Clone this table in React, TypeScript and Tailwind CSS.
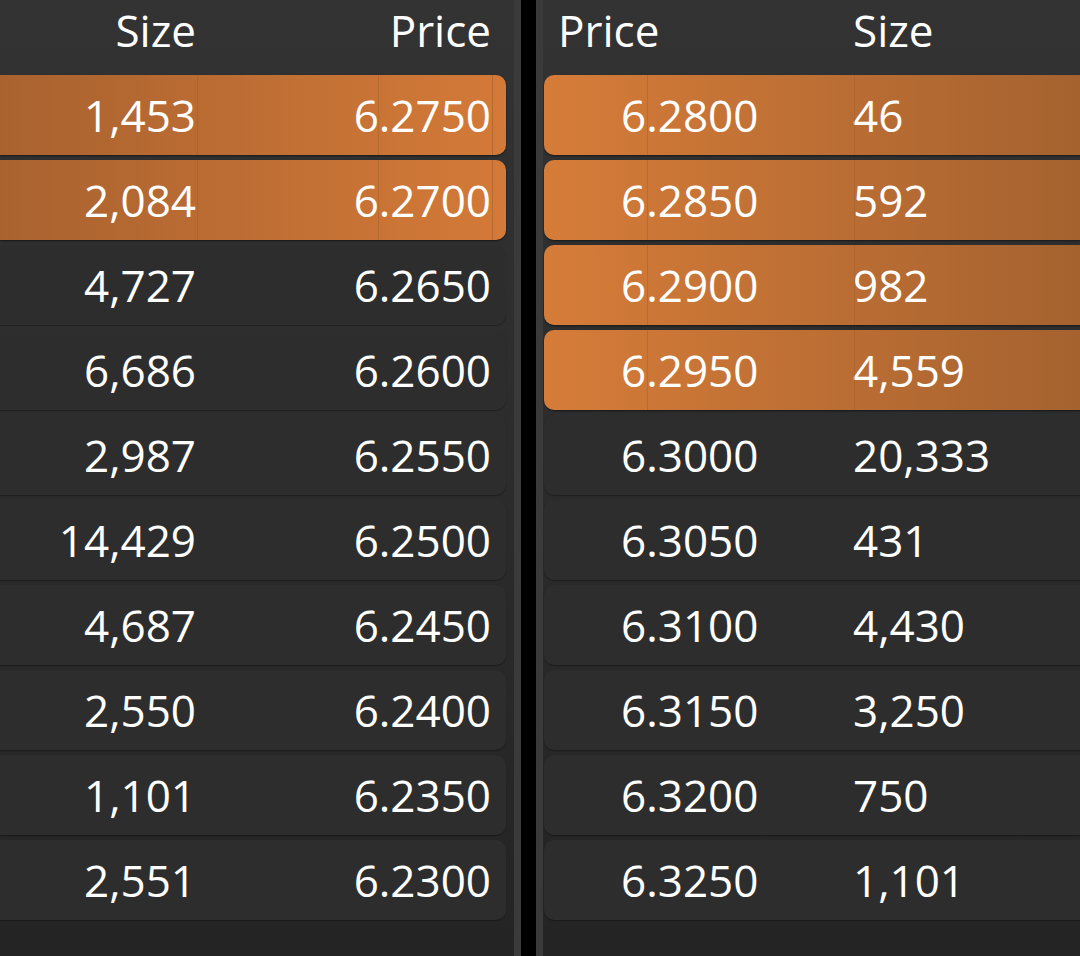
import React from "react";

const bids: [string, string][] = [
  ["1,453", "6.2750"],
  ["2,084", "6.2700"],
  ["4,727", "6.2650"],
  ["6,686", "6.2600"],
  ["2,987", "6.2550"],
  ["14,429", "6.2500"],
  ["4,687", "6.2450"],
  ["2,550", "6.2400"],
  ["1,101", "6.2350"],
  ["2,551", "6.2300"],
];

const asks: [string, string][] = [
  ["6.2800", "46"],
  ["6.2850", "592"],
  ["6.2900", "982"],
  ["6.2950", "4,559"],
  ["6.3000", "20,333"],
  ["6.3050", "431"],
  ["6.3100", "4,430"],
  ["6.3150", "3,250"],
  ["6.3200", "750"],
  ["6.3250", "1,101"],
];

const font = { fontFamily: '"Open Sans", "Noto Sans", sans-serif' };

function BidRow({ size, price, hi }: { size: string; price: string; hi: boolean }) {
  return (
    <div
      className={
        "relative flex h-[80px] w-[506px] items-center rounded-r-[10px] leading-[60px] " +
        (hi
          ? "bg-gradient-to-r from-[#a9622f] to-[#d47a38] shadow-[0_1px_2px_rgba(0,0,0,0.5)]"
          : "bg-[#2d2d2d] shadow-[0_1px_1px_rgba(0,0,0,0.3)]")
      }
    >
      {hi && (
        <>
          <span className="absolute top-0 bottom-0 left-[197px] w-px bg-[#9a5a2a]/40" />
          <span className="absolute top-0 bottom-0 left-[378px] w-px bg-[#9a5a2a]/40" />
          <span className="absolute top-0 bottom-0 left-[492px] w-px bg-[#9a5a2a]/50" />
        </>
      )}
      <div className="w-[197px] pr-px text-right">{size}</div>
      <div className="w-[295px] pr-px text-right">{price}</div>
    </div>
  );
}

function AskRow({ price, size, hi }: { price: string; size: string; hi: boolean }) {
  return (
    <div
      className={
        "relative flex h-[80px] w-full items-center rounded-l-[10px] leading-[60px] " +
        (hi
          ? "bg-gradient-to-r from-[#d67c39] to-[#a5622f] shadow-[0_1px_2px_rgba(0,0,0,0.5)]"
          : "bg-[#2d2d2d] shadow-[0_1px_1px_rgba(0,0,0,0.3)]")
      }
    >
      {hi && (
        <>
          <span className="absolute top-0 bottom-0 left-[103px] w-px bg-[#9a5a2a]/40" />
          <span className="absolute top-0 bottom-0 left-[310px] w-px bg-[#9a5a2a]/40" />
        </>
      )}
      <div className="w-[309px] pl-[77px]">{price}</div>
      <div>{size}</div>
    </div>
  );
}

export default function App() {
  return (
    <div
      className="flex h-[956px] w-[1080px] overflow-hidden bg-black text-[44px] text-white"
      style={font}
    >
      {/* Left (bids) */}
      <div className="flex h-full w-[514px] flex-col bg-gradient-to-b from-[#333333] to-[#242424]">
        <div className="flex h-[75px] w-[506px] items-start leading-[60px]">
          <div className="w-[197px] pr-px text-right">Size</div>
          <div className="w-[295px] pr-px text-right">Price</div>
        </div>
        <div className="flex flex-col gap-[5px]">
          {bids.map(([s, p], i) => (
            <BidRow key={i} size={s} price={p} hi={i < 2} />
          ))}
        </div>
      </div>
      <div className="h-full w-[7px] bg-[#3a3a3a]" />
      <div className="h-full w-[15px] bg-black" />
      <div className="h-full w-[7px] bg-[#3a3a3a]" />
      {/* Right (asks) */}
      <div className="flex h-full flex-1 flex-col bg-gradient-to-b from-[#333333] to-[#242424] pl-px">
        <div className="flex h-[75px] items-start leading-[60px]">
          <div className="w-[309px] pl-[14px]">Price</div>
          <div>Size</div>
        </div>
        <div className="flex flex-col gap-[5px]">
          {asks.map(([p, s], i) => (
            <AskRow key={i} price={p} size={s} hi={i < 4} />
          ))}
        </div>
      </div>
    </div>
  );
}
